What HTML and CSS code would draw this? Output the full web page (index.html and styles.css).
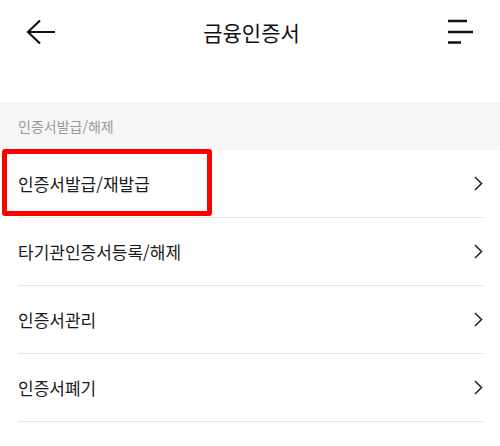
FILE: index.html
```html
<!DOCTYPE html>
<html lang="ko">
<head>
    <meta charset="UTF-8">
    <meta name="viewport" content="width=device-width, initial-scale=1.0">
    <title>금융인증서</title>
    <link rel="stylesheet" href="styles.css">
</head>
<body>
    <div id="app">
        <header class="top-bar">
            <button class="icon-btn back-btn" aria-label="뒤로">
                <svg width="30" height="26" viewBox="0 0 30 26">
                    <path d="M14 1.5 L2 13 L14 24.5 M2 13 H29" fill="none" stroke="#111" stroke-width="2.2"/>
                </svg>
            </button>
            <h1 class="title">금융인증서</h1>
            <button class="icon-btn menu-btn" aria-label="메뉴">
                <svg width="27" height="26" viewBox="0 0 27 26">
                    <path d="M1 2 H20 M1 13 H26 M1 23.5 H14" fill="none" stroke="#111" stroke-width="2.4"/>
                </svg>
            </button>
        </header>

        <div class="section-title">인증서발급/해제</div>

        <ul class="menu-list">
            <li class="menu-item highlighted">
                <span>인증서발급/재발급</span>
                <svg class="chevron" width="9" height="15" viewBox="0 0 9 15"><path d="M1 1 L7.5 7.5 L1 14" fill="none" stroke="#222" stroke-width="1.5"/></svg>
            </li>
            <li class="menu-item">
                <span>타기관인증서등록/해제</span>
                <svg class="chevron" width="9" height="15" viewBox="0 0 9 15"><path d="M1 1 L7.5 7.5 L1 14" fill="none" stroke="#222" stroke-width="1.5"/></svg>
            </li>
            <li class="menu-item">
                <span>인증서관리</span>
                <svg class="chevron" width="9" height="15" viewBox="0 0 9 15"><path d="M1 1 L7.5 7.5 L1 14" fill="none" stroke="#222" stroke-width="1.5"/></svg>
            </li>
            <li class="menu-item">
                <span>인증서폐기</span>
                <svg class="chevron" width="9" height="15" viewBox="0 0 9 15"><path d="M1 1 L7.5 7.5 L1 14" fill="none" stroke="#222" stroke-width="1.5"/></svg>
            </li>
        </ul>
    </div>
</body>
</html>
```

FILE: styles.css
```css
body {
    margin: 0;
    background: #fff;
    font-family: "Noto Sans CJK KR", "Noto Sans", sans-serif;
    color: #222;
}

#app {
    width: 500px;
}

.top-bar {
    height: 64px;
    display: flex;
    align-items: center;
    justify-content: space-between;
    padding: 0 26px 0 26px;
}

.icon-btn {
    background: none;
    border: none;
    padding: 0;
    display: flex;
    cursor: pointer;
}

.title {
    margin: 0;
    font-size: 21px;
    font-weight: 400;
    color: #111;
}

.section-title {
    margin-top: 38px;
    height: 48px;
    display: flex;
    align-items: center;
    padding-left: 18px;
    background-color: #f6f6f6;
    color: #9a9a9a;
    font-size: 14px;
}

.menu-list {
    list-style: none;
    margin: 0;
    padding: 0 17px 0 18px;
}

.menu-item {
    position: relative;
    height: 67px;
    display: flex;
    align-items: center;
    justify-content: space-between;
    border-bottom: 1px solid #e4e4e4;
    font-size: 17px;
    color: #1a1a1a;
}

.chevron {
    display: block;
}

.highlighted::after {
    content: "";
    position: absolute;
    left: -16px;
    top: -1px;
    width: 200px;
    height: 57px;
    border: 5px solid #f00;
    border-radius: 3px;
}
```
